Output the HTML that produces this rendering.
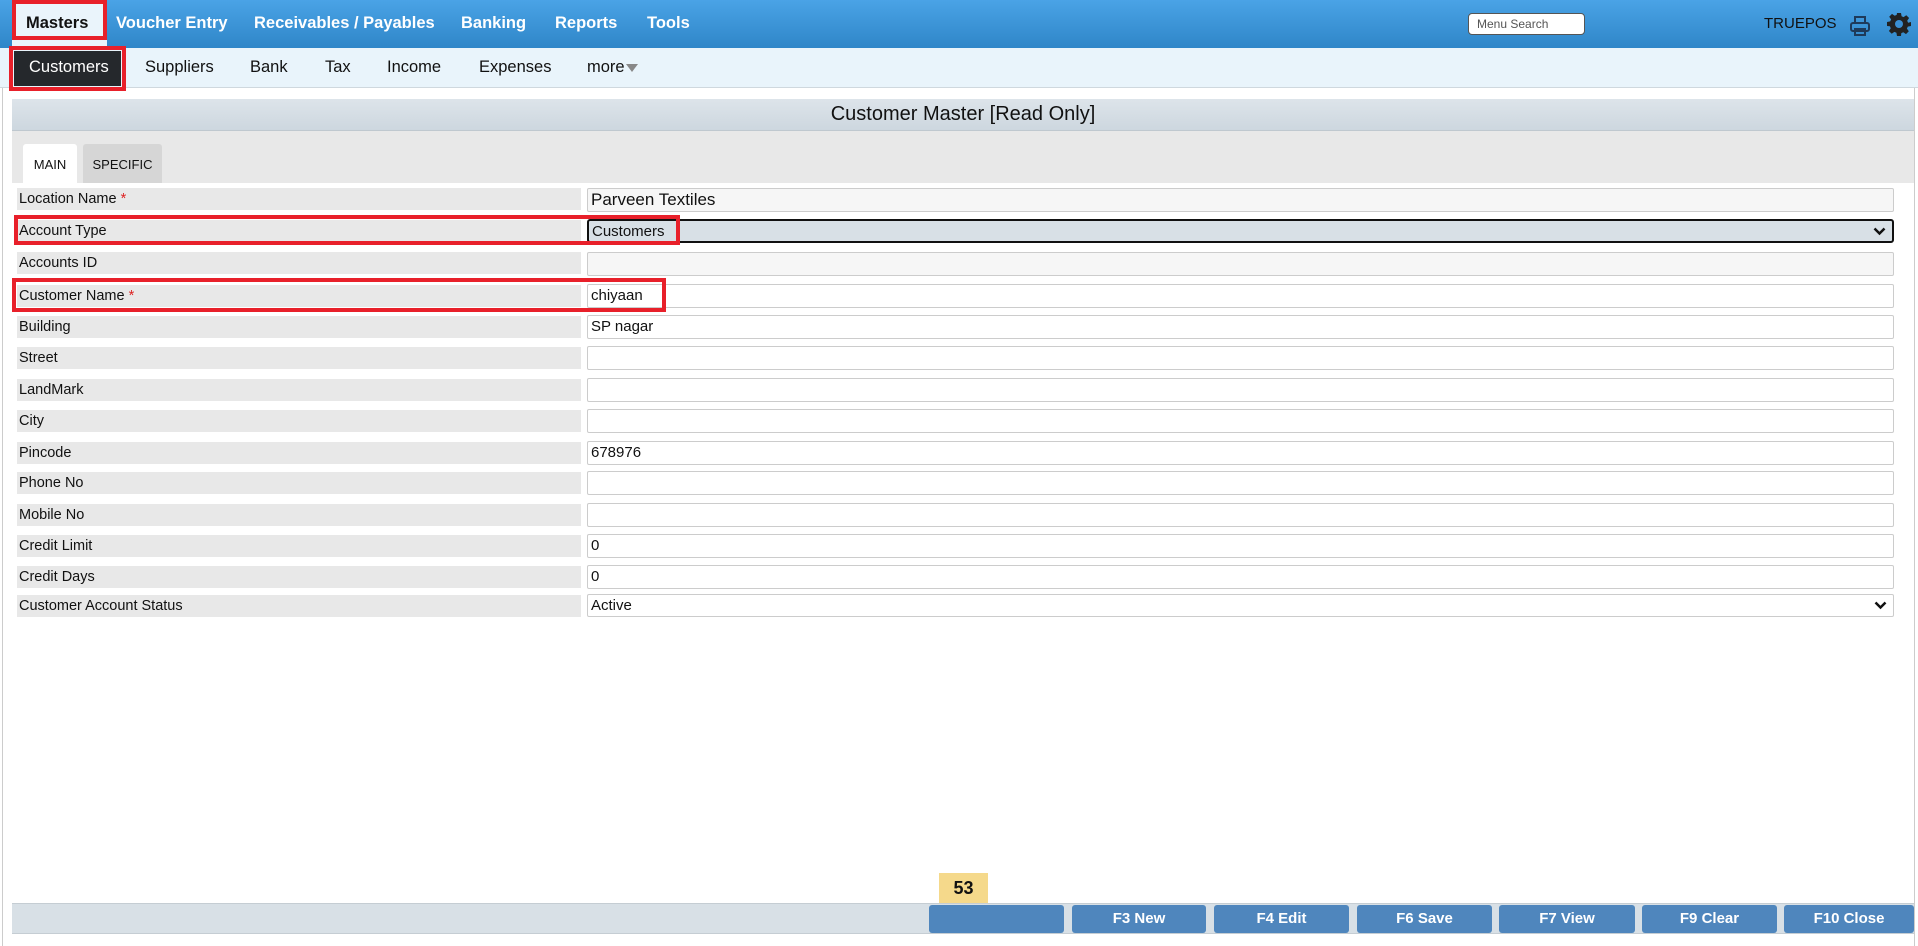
<!DOCTYPE html>
<html><head><meta charset="utf-8"><style>
*{box-sizing:border-box;margin:0;padding:0}
body{width:1918px;height:946px;position:relative;overflow:hidden;background:#fff;font-family:"Liberation Sans",Arial,sans-serif;color:#111}
.top{position:absolute;left:0;top:0;width:1918px;height:48px;background:linear-gradient(#4aa3e6,#2f86c8)}
.top .n{position:absolute;top:14px;font-size:16.5px;font-weight:bold;color:#fff}
.sub{position:absolute;left:0;top:48px;width:1918px;height:40px;background:#e9f4fb;border-bottom:1px solid #cfd8de}
.sub .n{position:absolute;top:10px;font-size:16.5px;color:#111}
.red{position:absolute;border:4px solid #e8202a}
.panel{position:absolute;left:2px;top:88px;width:1913px;height:858px;border-left:1px solid #ccc;border-right:1px solid #ccc}
.hdr{position:absolute;left:12px;top:99px;width:1902px;height:32px;background:linear-gradient(#dde4ea,#cdd7df);border-bottom:1px solid #bfc8cf;text-align:center;font-size:20px;line-height:30px}
.tabs{position:absolute;left:12px;top:131px;width:1902px;height:52px;background:#e8e8e8}
.tab{position:absolute;top:13px;height:39px;font-size:13px;line-height:42px;text-align:center;border-radius:3px 3px 0 0}
.lab{position:absolute;left:17px;width:564px;height:22px;background:#e8e8e8;font-size:14.5px;line-height:23px;padding-left:2px}
.lab b{color:#d22;font-weight:normal}
.inp{position:absolute;left:587px;width:1307px;height:24px;border:1px solid #ccc;background:#fff;font-size:15px;line-height:22px;padding-left:3px;border-radius:2px}
.chev{position:absolute;right:6px;top:6px}
.bar{position:absolute;left:12px;top:903px;width:1902px;height:31px;background:#d8e0e6;border-top:1px solid #c5cdd3;border-bottom:1px solid #c5cdd3}
.btn{position:absolute;top:905px;height:28px;background:#4f86bd;border-radius:3px;color:#fff;font-weight:bold;font-size:15px;line-height:28px;text-align:center}
</style></head><body>
<div class="top">
<div style="position:absolute;left:12px;top:0;width:95px;height:48px;background:#eaf4fb"></div>
<div class="n" style="left:26px;color:#111">Masters</div>
<div class="n" style="left:116px">Voucher Entry</div>
<div class="n" style="left:254px">Receivables / Payables</div>
<div class="n" style="left:461px">Banking</div>
<div class="n" style="left:555px">Reports</div>
<div class="n" style="left:647px">Tools</div>
<div style="position:absolute;left:1468px;top:13px;width:117px;height:22px;background:#fff;border:1px solid #555;border-radius:4px;font-size:12px;color:#555;line-height:20px;padding-left:8px">Menu Search</div>
<div style="position:absolute;left:1764px;top:15px;font-size:15px;color:#111">TRUEPOS</div>
<svg style="position:absolute;left:1849px;top:15px" width="22" height="22" viewBox="0 0 22 22" fill="none" stroke="#1e3a5a" stroke-width="2"><rect x="6" y="2" width="10" height="6"/><rect x="2" y="8" width="18" height="8" rx="2"/><rect x="6" y="14" width="10" height="6"/></svg>
<svg style="position:absolute;left:1887px;top:12px" width="24" height="24" viewBox="0 0 24 24"><path fill="#222" d="M10 1h4l.6 3.2 2 .9 2.7-1.9 2.8 2.8-1.9 2.7.9 2L24 10v4l-3.2.6-.9 2 1.9 2.7-2.8 2.8-2.7-1.9-2 .9L14 24h-4l-.6-3.2-2-.9-2.7 1.9-2.8-2.8 1.9-2.7-.9-2L0 14v-4l3.2-.6.9-2L2.2 4.7 5 1.9l2.7 1.9 2-.9z"/><circle cx="12" cy="12" r="4" fill="#3a8fd4"/></svg>
</div>
<div class="red" style="left:12px;top:0;width:95px;height:40px"></div>
<div class="sub">
<div style="position:absolute;left:14px;top:3px;width:107px;height:35px;background:#25282c"></div>
<div class="n" style="left:29px;color:#fff">Customers</div>
<div class="n" style="left:145px">Suppliers</div>
<div class="n" style="left:250px">Bank</div>
<div class="n" style="left:325px">Tax</div>
<div class="n" style="left:387px">Income</div>
<div class="n" style="left:479px">Expenses</div>
<div class="n" style="left:587px">more</div>
<svg style="position:absolute;left:626px;top:16px" width="12" height="9" viewBox="0 0 12 9"><path d="M0 0h12L6 8z" fill="#888"/></svg>
</div>
<div class="red" style="left:9px;top:46px;width:117px;height:45px"></div>
<div class="panel"></div>
<div class="hdr">Customer Master [Read Only]</div>
<div class="tabs">
<div class="tab" style="left:11px;width:54px;background:#fff">MAIN</div>
<div class="tab" style="left:71px;width:79px;background:#d6d6d6">SPECIFIC</div>
</div>

<div class="lab" style="top:188px">Location Name <b>*</b></div><div class="inp" style="top:188px;background:#f6f6f6;font-size:17px">Parveen Textiles</div>
<div class="lab" style="top:220px">Account Type</div><div class="inp" style="top:219px;background:#d8e0e6;border:2px solid #111;border-radius:3px">Customers<svg class="chev" style="top:6px" width="13" height="9" viewBox="0 0 13 9"><path d="M1.5 1.5l5 5 5-5" fill="none" stroke="#111" stroke-width="2.5"/></svg></div>
<div class="lab" style="top:252px">Accounts ID</div><div class="inp" style="top:252px;background:#f6f6f6"></div>
<div class="lab" style="top:285px">Customer Name <b>*</b></div><div class="inp" style="top:284px">chiyaan</div>
<div class="lab" style="top:316px">Building</div><div class="inp" style="top:315px">SP nagar</div>
<div class="lab" style="top:347px">Street</div><div class="inp" style="top:346px"></div>
<div class="lab" style="top:379px">LandMark</div><div class="inp" style="top:378px"></div>
<div class="lab" style="top:410px">City</div><div class="inp" style="top:409px"></div>
<div class="lab" style="top:442px">Pincode</div><div class="inp" style="top:441px">678976</div>
<div class="lab" style="top:472px">Phone No</div><div class="inp" style="top:471px"></div>
<div class="lab" style="top:504px">Mobile No</div><div class="inp" style="top:503px"></div>
<div class="lab" style="top:535px">Credit Limit</div><div class="inp" style="top:534px">0</div>
<div class="lab" style="top:566px">Credit Days</div><div class="inp" style="top:565px">0</div>
<div class="lab" style="top:595px">Customer Account Status</div><div class="inp" style="top:594px;height:23px;line-height:21px">Active<svg class="chev" style="top:6px" width="13" height="9" viewBox="0 0 13 9"><path d="M1.5 1.5l5 5 5-5" fill="none" stroke="#111" stroke-width="2.5"/></svg></div>

<div class="red" style="left:14px;top:215px;width:666px;height:30px"></div>
<div class="red" style="left:12px;top:278px;width:654px;height:34px"></div>

<div style="position:absolute;left:939px;top:873px;width:49px;height:30px;background:#f5d98b;font-weight:bold;font-size:18px;text-align:center;line-height:30px">53</div>
<div class="bar"></div>
<div class="btn" style="left:929px;width:135px"></div>
<div class="btn" style="left:1072px;width:134px">F3 New</div>
<div class="btn" style="left:1214px;width:135px">F4 Edit</div>
<div class="btn" style="left:1357px;width:135px">F6 Save</div>
<div class="btn" style="left:1499px;width:136px">F7 View</div>
<div class="btn" style="left:1642px;width:135px">F9 Clear</div>
<div class="btn" style="left:1784px;width:130px">F10 Close</div>
</body></html>
